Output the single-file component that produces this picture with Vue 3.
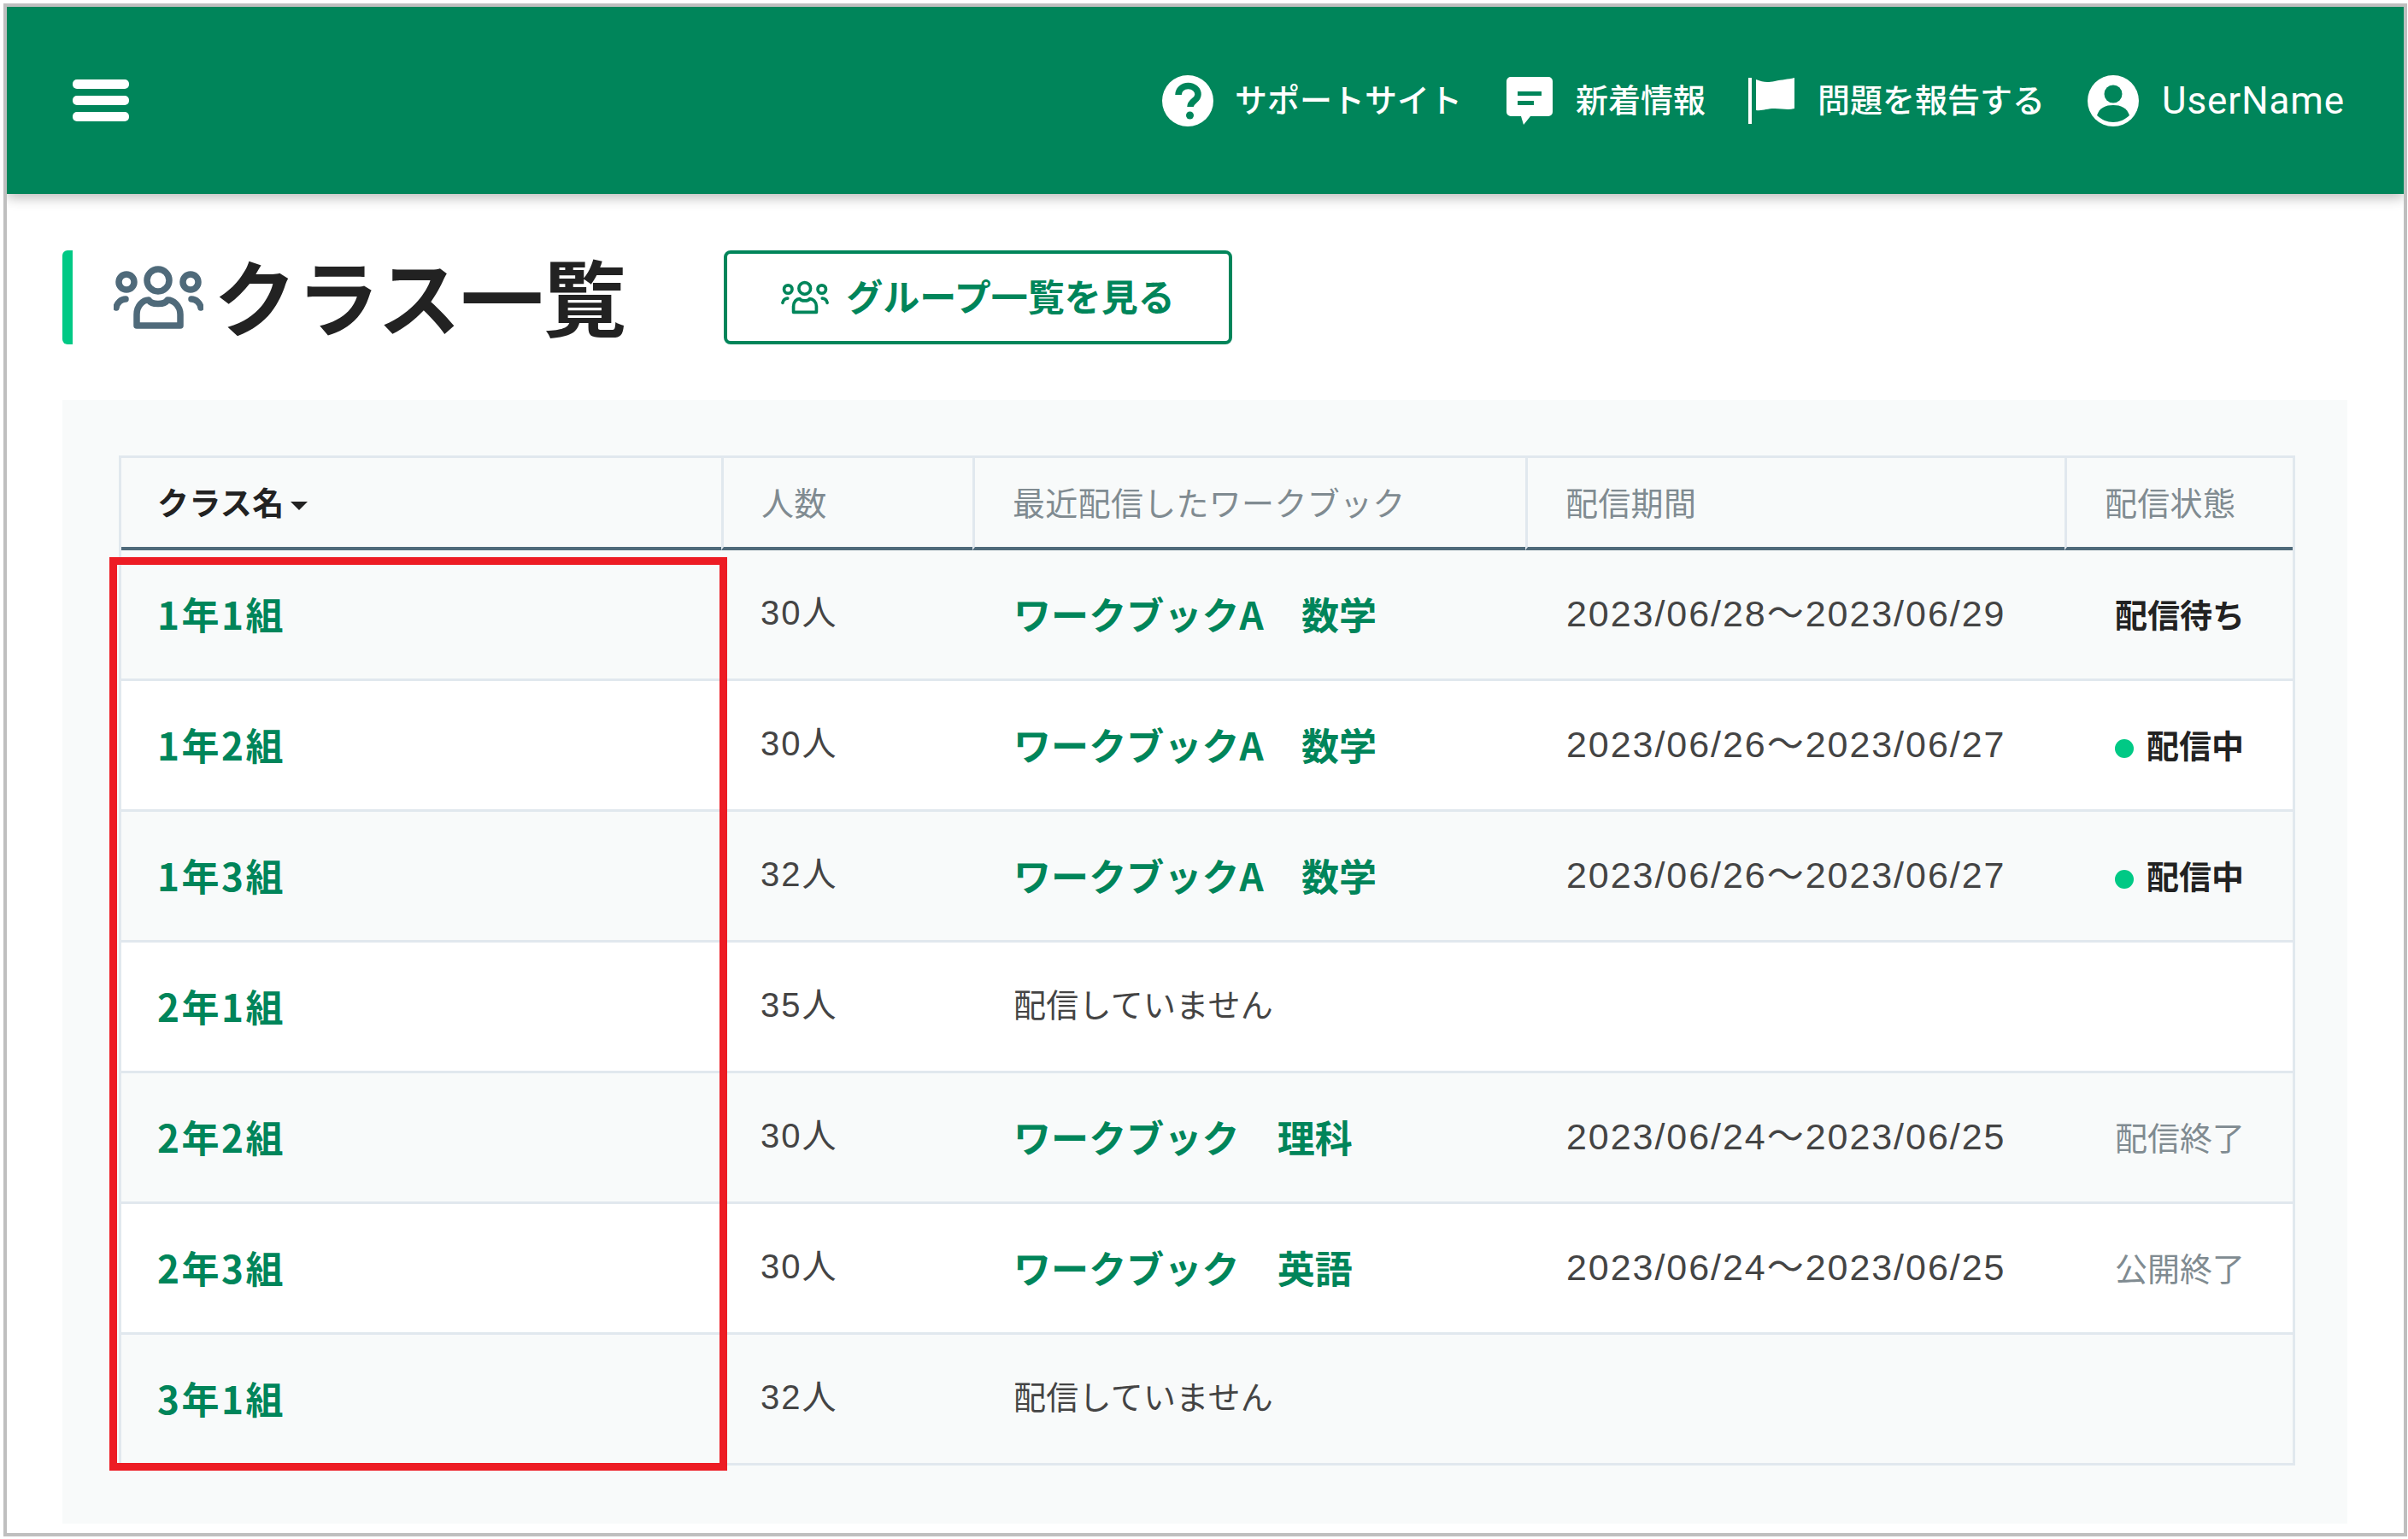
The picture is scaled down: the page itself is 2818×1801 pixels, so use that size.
<template>
  <div class="frame">
    <header class="app-header">
      <button class="menu-btn" aria-label="menu">
        <span></span><span></span><span></span>
      </button>
      <nav class="header-nav">
        <a class="nav-item">
          <svg class="nav-icon" width="60" height="60" viewBox="0 0 60 60">
            <circle cx="30" cy="30" r="30" fill="#fff" />
            <path d="M19 23c0-6 5-10.500 11.500-10.500S42 17 42 22.500c0 7.500-9 7.500-9 14.500" fill="none" stroke="#00855a" stroke-width="7.500" />
            <circle cx="32.500" cy="47" r="4.500" fill="#00855a" />
          </svg>
          <span>サポートサイト</span>
        </a>
        <a class="nav-item">
          <svg class="nav-icon" width="54" height="56" viewBox="0 0 54 56">
            <path d="M5 0h44a5 5 0 0 1 5 5v36a5 5 0 0 1-5 5H28l-8 10-3-10H5a5 5 0 0 1-5-5V5a5 5 0 0 1 5-5z" fill="#fff" />
            <path d="M13 17h28v5H13zM13 28h19v5H13z" fill="#00855a" />
          </svg>
          <span>新着情報</span>
        </a>
        <a class="nav-item">
          <svg class="nav-icon" width="54" height="54" viewBox="0 0 54 54">
            <path d="M0 0h4v54H0z" fill="#fff" />
            <path d="M9 2c8 3 12 4 22 2 9-2 15-2 23-4v36c-8 2-14 0-23 0-10 0-14 3-22 2z" fill="#fff" />
          </svg>
          <span>問題を報告する</span>
        </a>
        <a class="nav-item">
          <svg class="nav-icon" width="60" height="60" viewBox="0 0 60 60">
            <circle cx="30" cy="30" r="30" fill="#fff" />
            <circle cx="30" cy="22" r="10.500" fill="#00855a" />
            <path d="M11 47c3-9 10-12 19-12s16 3 19 12c-5 5-12 8-19 8s-14-3-19-8z" fill="#00855a" />
          </svg>
          <span class="user-name">UserName</span>
        </a>
      </nav>
    </header>

    <main class="content">
      <div class="title-row">
        <h1 class="page-title">
          <svg class="title-icon" width="105" height="76" viewBox="0 0 105 76">
            <g fill="none" stroke="#4f6a7a" stroke-width="7.500" stroke-linecap="round">
              <circle cx="52" cy="18" r="13" />
              <circle cx="15" cy="20" r="9" />
              <circle cx="90" cy="20" r="9" />
              <path d="M27 71V58c0-10 7-17 14-17 3 6 19 6 22 0 7 0 15 7 15 17v13z" stroke-linejoin="round" />
              <path d="M3 50c1-6 6-10 11-10M102 50c-1-6-6-10-11-10" />
            </g>
          </svg>
          <span class="title-text">クラス一覧</span>
        </h1>
        <a class="group-btn">
          <svg width="56" height="40" viewBox="0 0 105 76">
            <g fill="none" stroke="#00855a" stroke-width="7" stroke-linecap="round">
              <circle cx="52" cy="18" r="13" />
              <circle cx="15" cy="20" r="9" />
              <circle cx="90" cy="20" r="9" />
              <path d="M27 71V58c0-10 7-17 14-17 3 6 19 6 22 0 7 0 15 7 15 17v13z" stroke-linejoin="round" />
              <path d="M3 50c1-6 6-10 11-10M102 50c-1-6-6-10-11-10" />
            </g>
          </svg>
          <span class="btn-text">グループ一覧を見る</span>
        </a>
      </div>

      <section class="panel">
        <div class="table-wrap">
          <table class="class-table">
            <colgroup>
              <col style="width: 702px" />
              <col style="width: 294px" />
              <col style="width: 647px" />
              <col style="width: 631px" />
              <col style="width: 267px" />
            </colgroup>
            <thead>
              <tr>
                <th class="sorted">クラス名<i class="caret"></i></th>
                <th>人数</th>
                <th>最近配信したワークブック</th>
                <th>配信期間</th>
                <th>配信状態</th>
              </tr>
            </thead>
            <tbody>
              <tr v-for="row in rows" :key="row.name">
                <td class="name">{{ row.name }}</td>
                <td class="plain count">{{ row.count }}</td>
                <td v-if="row.book" class="book">{{ row.book }}</td>
                <td v-else class="plain">配信していません</td>
                <td class="plain date">{{ row.period }}</td>
                <td class="status" :class="row.statusClass">
                  <i v-if="row.statusClass === 'live'" class="dot"></i>{{ row.status }}
                </td>
              </tr>
            </tbody>
          </table>
          <div class="highlight"></div>
        </div>
      </section>
    </main>
  </div>
</template>

<script setup>
const rows = [
  { name: '1年1組', count: '30人', book: 'ワークブックA　数学', period: '2023/06/28〜2023/06/29', status: '配信待ち', statusClass: 'waiting' },
  { name: '1年2組', count: '30人', book: 'ワークブックA　数学', period: '2023/06/26〜2023/06/27', status: '配信中', statusClass: 'live' },
  { name: '1年3組', count: '32人', book: 'ワークブックA　数学', period: '2023/06/26〜2023/06/27', status: '配信中', statusClass: 'live' },
  { name: '2年1組', count: '35人', book: '', period: '', status: '', statusClass: '' },
  { name: '2年2組', count: '30人', book: 'ワークブック　理科', period: '2023/06/24〜2023/06/25', status: '配信終了', statusClass: 'ended' },
  { name: '2年3組', count: '30人', book: 'ワークブック　英語', period: '2023/06/24〜2023/06/25', status: '公開終了', statusClass: 'ended' },
  { name: '3年1組', count: '32人', book: '', period: '', status: '', statusClass: '' }
]
</script>

<style>
html,
body {
  margin: 0;
  background: #fff;
}
</style>

<style scoped>
.frame {
  box-sizing: border-box;
  width: 2813px;
  height: 1794px;
  margin: 4px 1px 3px 4px;
  border: 4px solid #bfbfbf;
  background: #fff;
  overflow: hidden;
  font-family: "Noto Sans CJK JP", "Liberation Sans", sans-serif;
  color: #333;
}

.app-header {
  position: relative;
  display: flex;
  align-items: center;
  justify-content: space-between;
  height: 219px;
  padding: 0 69px 0 77px;
  background: #00855a;
  box-shadow: 0 4px 14px rgba(0, 0, 0, 0.28);
}

.menu-btn {
  display: flex;
  flex-direction: column;
  gap: 8px;
  width: 66px;
  padding: 0;
  border: none;
  background: none;
}

.menu-btn span {
  height: 11px;
  border-radius: 5px;
  background: #fff;
}

.header-nav {
  display: flex;
  align-items: center;
  gap: 50px;
  color: #fff;
  font-size: 38px;
  font-weight: 500;
}

.nav-item {
  display: flex;
  align-items: center;
  gap: 27px;
  line-height: 60px;
}

.nav-item:first-child {
  margin-right: 2px;
  gap: 25px;
}

.nav-item span {
  padding-bottom: 6px;
}

.nav-item span.user-name {
  padding-bottom: 0;
  font-size: 44px;
  letter-spacing: 0.9px;
  font-weight: 400;
  font-family: Roboto, sans-serif;
}

.content {
  padding: 66px 66px 0 65px;
}

.title-row {
  display: flex;
  align-items: center;
  height: 110px;
}

.page-title {
  display: flex;
  align-items: center;
  gap: 12px;
  box-sizing: border-box;
  width: 774px;
  height: 110px;
  margin: 0;
  padding-left: 48px;
  border-left: 12px solid #00c985;
  border-radius: 6px;
  color: #222;
  font-size: 97px;
  font-weight: 700;
  line-height: 1;
}

.title-text {
  padding-bottom: 10px;
}

.group-btn {
  display: flex;
  align-items: center;
  justify-content: center;
  gap: 20px;
  box-sizing: border-box;
  width: 595px;
  height: 110px;
  border: 4px solid #00855a;
  border-radius: 8px;
  color: #00855a;
  font-size: 43px;
  font-weight: 700;
}

.btn-text {
  padding-bottom: 6px;
}

.panel {
  margin-top: 65px;
  padding: 65px 64px 68px 66px;
  background: #f8fafa;
}

.table-wrap {
  position: relative;
}

.class-table {
  width: 2547px;
  border-collapse: separate;
  border-spacing: 0;
  table-layout: fixed;
  border-top: 3px solid #e1e8ee;
  border-left: 3px solid #e1e8ee;
  border-right: 3px solid #e1e8ee;
}

.class-table th {
  box-sizing: border-box;
  height: 108px;
  padding: 0 0 3px 44px;
  border-bottom: 4px solid #4f6a7a;
  border-left: 3px solid #e1e8ee;
  color: #808b91;
  font-size: 38px;
  font-weight: 400;
  letter-spacing: 0.300px;
  text-align: left;
}

.class-table th:first-child {
  border-left: none;
  padding-left: 42px;
}

.class-table th.sorted {
  color: #222;
  font-size: 37px;
  font-weight: 700;
}

.caret {
  display: inline-block;
  margin-left: 8px;
  border-top: 10px solid #222;
  border-left: 10px solid transparent;
  border-right: 10px solid transparent;
  vertical-align: middle;
}

.class-table td {
  box-sizing: border-box;
  height: 153px;
  padding: 0 0 2px 48px;
  border-bottom: 3px solid #e1e8ee;
  white-space: nowrap;
}

.class-table tbody tr:nth-child(even) td {
  background: #fff;
}

.class-table td.name {
  padding-left: 42px;
  letter-spacing: 2.500px;
}

.name,
.book {
  color: #00855a;
  font-size: 44px;
  font-weight: 700;
}

.book {
  letter-spacing: 0.100px;
}

.class-table td.plain {
  color: #444;
  font-size: 38px;
  letter-spacing: 0.300px;
  padding-bottom: 10px;
}

.class-table td.count {
  padding-left: 46px;
  font-family: "Liberation Sans", "Noto Sans CJK JP", sans-serif;
  font-size: 40px;
  letter-spacing: 2px;
}

.class-table td.date {
  font-family: "Liberation Sans", "Noto Sans CJK JP", sans-serif;
  font-size: 43px;
  letter-spacing: 1.950px;
}

.class-table td.status {
  color: #222;
  font-size: 38px;
  font-weight: 700;
  padding-left: 59px;
  padding-bottom: 4px;
}

.class-table td.status.ended {
  color: #808b91;
  font-weight: 400;
}

.dot {
  display: inline-block;
  width: 22px;
  height: 22px;
  margin-right: 15px;
  border-radius: 50%;
  background: #00c985;
}

.highlight {
  position: absolute;
  left: -11px;
  top: 119px;
  box-sizing: border-box;
  width: 723px;
  height: 1069px;
  border: 9px solid #ed1c24;
  pointer-events: none;
}
</style>
